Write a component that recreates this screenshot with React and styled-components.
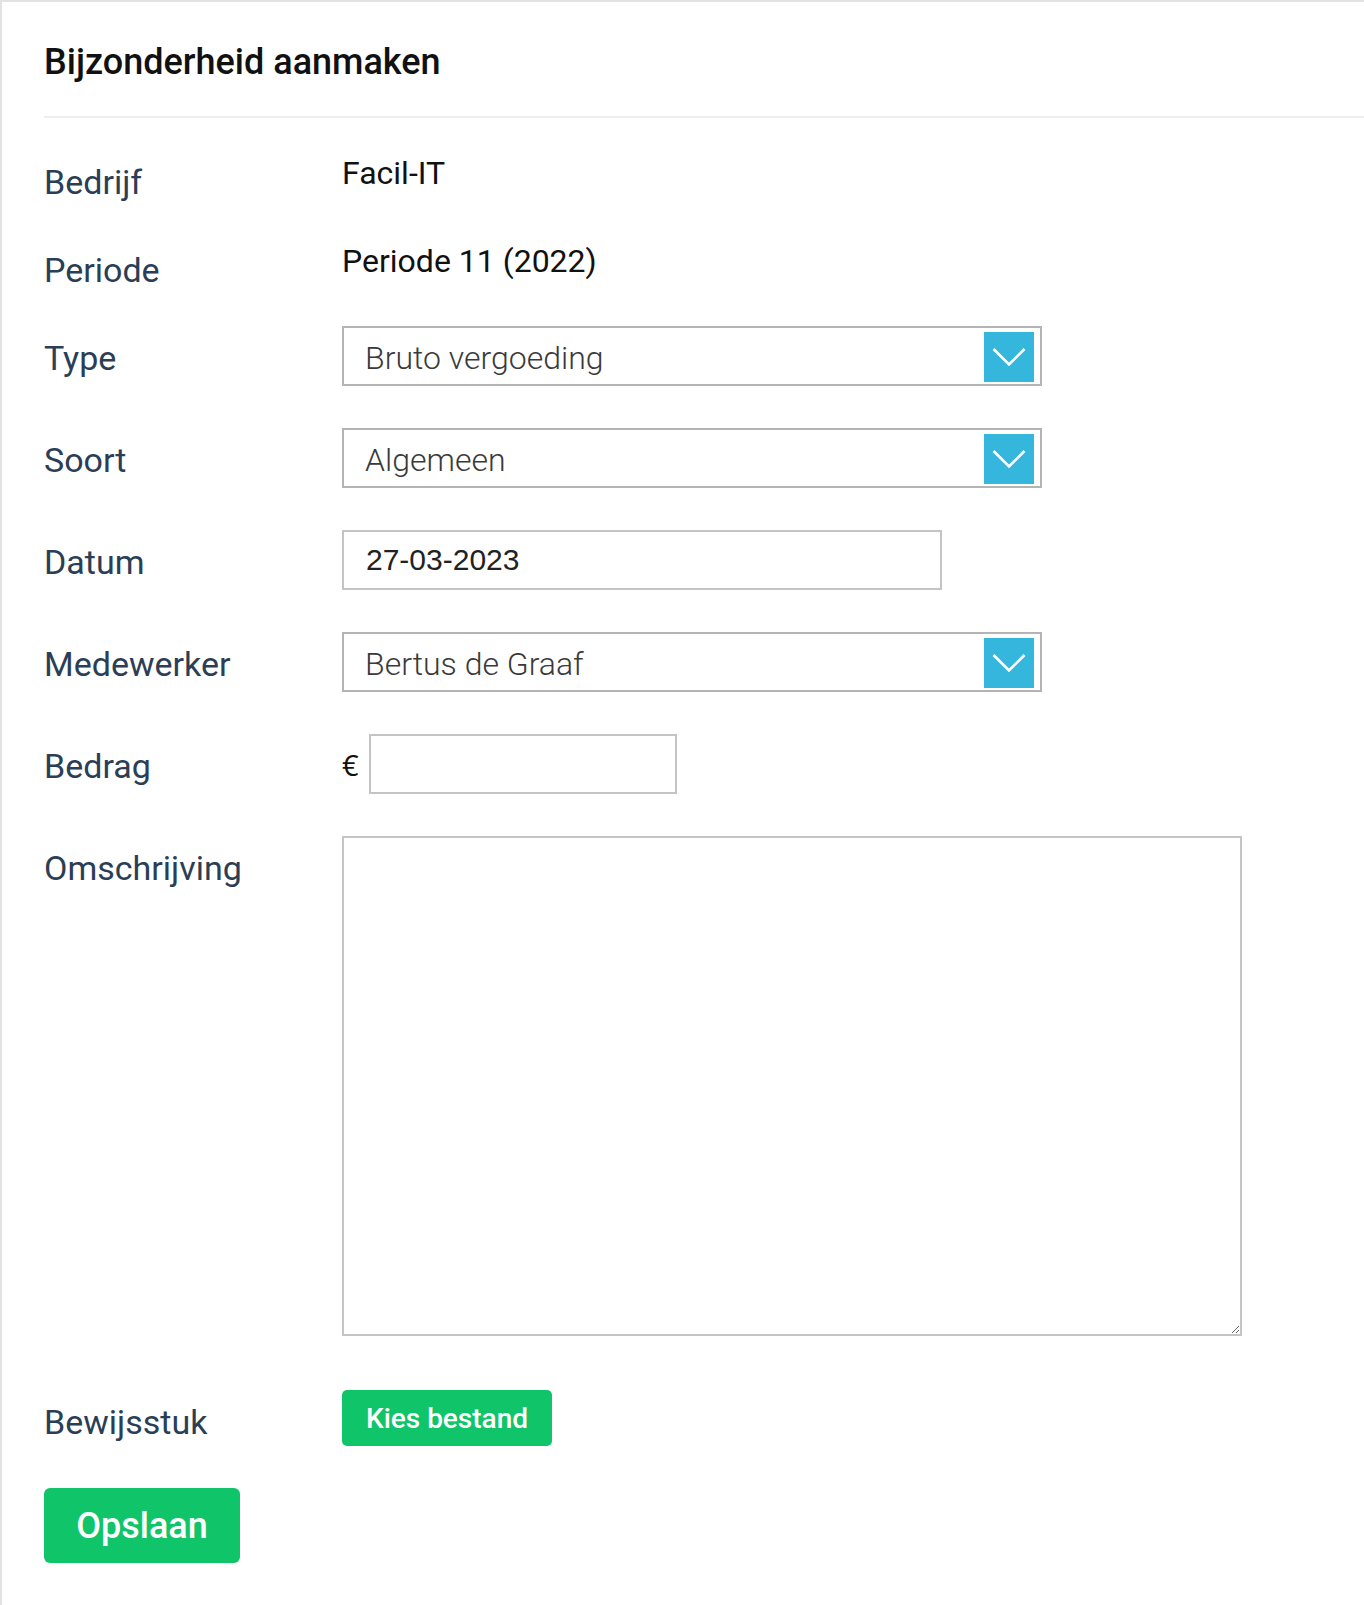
import React from 'react';
import styled, { createGlobalStyle } from 'styled-components';

const GlobalStyle = createGlobalStyle`
  html, body {
    margin: 0;
    padding: 0;
    background: #ffffff;
  }
  body {
    font-family: Roboto, "Liberation Sans", Arial, sans-serif;
  }
  * {
    box-sizing: border-box;
  }
`;

const Panel = styled.div`
  min-height: 1605px;
  border-top: 2px solid #e2e2e2;
  border-left: 2px solid #e2e2e2;
  padding-left: 42px;
`;

const Header = styled.div`
  height: 116px;
  padding-top: 6px;
  display: flex;
  align-items: center;
  border-bottom: 2px solid #eeeeee;
`;

const Title = styled.h1`
  margin: 0;
  font-family: Roboto, sans-serif;
  font-size: 36px;
  font-weight: 500;
  color: #111111;
`;

const Form = styled.form`
  padding-top: 34px;
`;

const Row = styled.div`
  display: grid;
  grid-template-columns: 298px 1fr;
  align-items: ${p => (p.$top ? 'start' : 'center')};
  min-height: 60px;
  margin-bottom: ${p => p.$gap || 42}px;
`;

const Label = styled.label`
  font-family: Roboto, sans-serif;
  font-size: 34px;
  height: 60px;
  line-height: ${p => 60 - (p.$shift ?? 4)}px;
  padding-top: ${p => p.$shift ?? 4}px;
  color: #2b3e55;
`;

const StaticValue = styled.div`
  font-family: Roboto, sans-serif;
  font-size: 32px;
  color: #111111;
  padding-bottom: 18px;
`;

const SelectWrap = styled.div`
  position: relative;
  width: 700px;
  height: 60px;
`;

const Select = styled.select`
  appearance: none;
  -webkit-appearance: none;
  width: 100%;
  height: 100%;
  border: 2px solid #b4b4b4;
  border-radius: 0;
  background: #ffffff;
  padding: 4px 70px 0 21px;
  font-family: Roboto, sans-serif;
  font-weight: 300;
  font-size: 32px;
  color: #3a3a3a;
  outline: none;
`;

const Chevron = styled.span`
  position: absolute;
  top: 6px;
  right: 8px;
  width: 50px;
  height: 50px;
  background: #35b6dd;
  display: flex;
  align-items: center;
  justify-content: center;
  pointer-events: none;
`;

const TextInput = styled.input`
  width: ${p => p.$width}px;
  height: 60px;
  border: 2px solid #c4c4c4;
  border-radius: 0;
  padding: 0 22px;
  font-family: "Liberation Sans", Arial, sans-serif;
  font-size: 30px;
  color: #222222;
  outline: none;
`;

const MoneyField = styled.div`
  display: flex;
  align-items: center;
  gap: 8px;
`;

const Currency = styled.span`
  font-family: "Open Sans", sans-serif;
  font-size: 29px;
  color: #111111;
  width: 19px;
`;

const TextArea = styled.textarea`
  width: 900px;
  height: 500px;
  border: 2px solid #c4c4c4;
  border-radius: 0;
  padding: 14px 20px;
  font-family: Roboto, sans-serif;
  font-size: 30px;
  outline: none;
  resize: both;
`;

const FileButton = styled.label`
  display: inline-flex;
  align-items: center;
  justify-content: center;
  width: 210px;
  height: 56px;
  background: #10c469;
  border-radius: 5px;
  color: #ffffff;
  font-family: Roboto, sans-serif;
  font-weight: 500;
  font-size: 28px;
  cursor: pointer;
  justify-self: start;
  input {
    display: none;
  }
`;

const SaveButton = styled.button`
  width: 196px;
  height: 75px;
  border: none;
  border-radius: 6px;
  background: #10c469;
  color: #ffffff;
  font-family: Roboto, sans-serif;
  font-weight: 500;
  font-size: 36px;
  cursor: pointer;
  padding: 0;
`;

const ChevronIcon = () => (
  <svg width="34" height="20" viewBox="0 0 34 20" fill="none">
    <polyline points="1.5,2 17,17.5 32.5,2" stroke="#ffffff" strokeWidth="2.6" />
  </svg>
);

const DropDown = ({ value, options }) => (
  <SelectWrap>
    <Select defaultValue={value}>
      {options.map(o => (
        <option key={o} value={o}>{o}</option>
      ))}
    </Select>
    <Chevron><ChevronIcon /></Chevron>
  </SelectWrap>
);

const App = () => (
  <>
    <GlobalStyle />
    <Panel>
      <Header>
        <Title>Bijzonderheid aanmaken</Title>
      </Header>
      <Form onSubmit={e => e.preventDefault()}>
        <Row $gap={28}>
          <Label $shift={0}>Bedrijf</Label>
          <StaticValue>Facil-IT</StaticValue>
        </Row>
        <Row $gap={26}>
          <Label $shift={0}>Periode</Label>
          <StaticValue>Periode 11 (2022)</StaticValue>
        </Row>
        <Row>
          <Label>Type</Label>
          <DropDown value="Bruto vergoeding" options={['Bruto vergoeding', 'Netto vergoeding', 'Inhouding']} />
        </Row>
        <Row>
          <Label>Soort</Label>
          <DropDown value="Algemeen" options={['Algemeen', 'Reiskosten', 'Overig']} />
        </Row>
        <Row>
          <Label>Datum</Label>
          <TextInput type="text" $width={600} defaultValue="27-03-2023" />
        </Row>
        <Row>
          <Label>Medewerker</Label>
          <DropDown value="Bertus de Graaf" options={['Bertus de Graaf']} />
        </Row>
        <Row>
          <Label>Bedrag</Label>
          <MoneyField>
            <Currency>€</Currency>
            <TextInput type="text" $width={308} />
          </MoneyField>
        </Row>
        <Row $top $gap={52}>
          <Label>Omschrijving</Label>
          <TextArea />
        </Row>
        <Row $gap={40}>
          <Label $shift={8}>Bewijsstuk</Label>
          <FileButton>
            Kies bestand
            <input type="file" />
          </FileButton>
        </Row>
        <SaveButton type="submit">Opslaan</SaveButton>
      </Form>
    </Panel>
  </>
);

export default App;
